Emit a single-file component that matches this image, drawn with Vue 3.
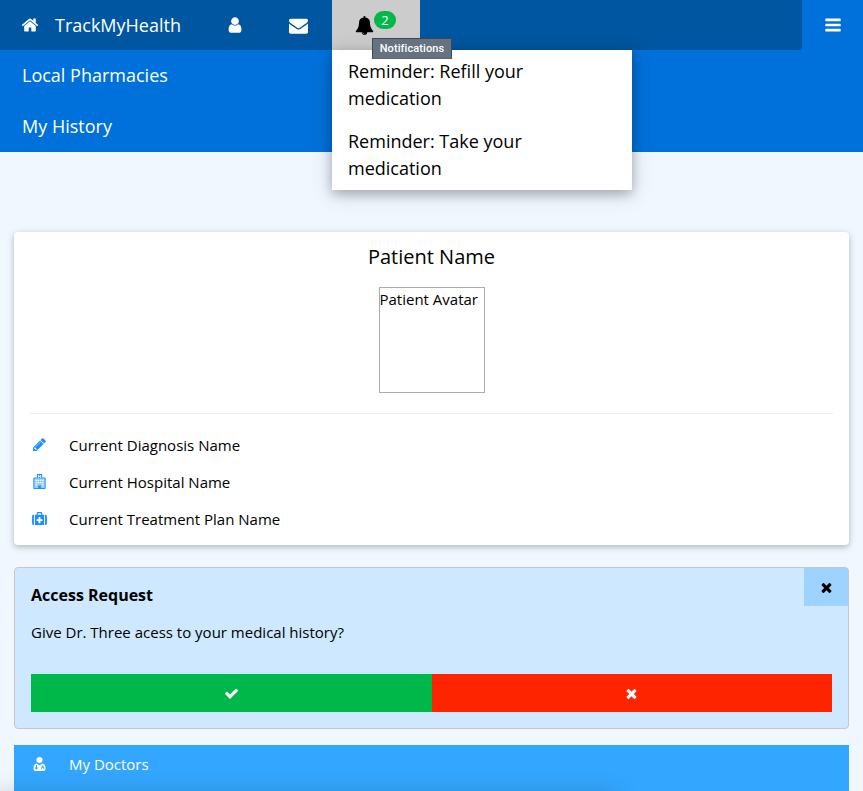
<template>
  <div class="page">
    <header class="header">
      <div class="top-row">
        <nav class="topbar">
          <a class="brand">
            <svg class="ic-home" viewBox="0 0 1792 1792"><path fill="currentColor" :d="icons.home" /></svg>
            <span class="brand-name">TrackMyHealth</span>
          </a>
          <a class="nav-cell nav-user">
            <svg class="ic-user" viewBox="0 0 1792 1792"><path fill="currentColor" :d="icons.user" /></svg>
          </a>
          <a class="nav-cell nav-mail">
            <svg class="ic-mail" viewBox="0 0 1792 1792"><path fill="currentColor" :d="icons.envelope" /></svg>
          </a>
          <a class="nav-bell">
            <svg class="ic-bell" viewBox="0 0 1792 1792"><path fill="currentColor" :d="icons.bell" /></svg>
            <span class="badge">2</span>
          </a>
        </nav>
        <button class="burger">
          <svg class="ic-bars" viewBox="0 0 1792 1792"><path fill="currentColor" :d="icons.bars" /></svg>
        </button>
      </div>
      <a class="side-link">Local Pharmacies</a>
      <a class="side-link">My History</a>
    </header>

    <div class="dropdown">
      <div v-for="note in notifications" :key="note" class="dropdown-item">{{ note }}</div>
    </div>
    <div class="tooltip">Notifications</div>

    <main class="main">
      <section class="card">
        <h2 class="patient-name">Patient Name</h2>
        <div class="avatar">Patient Avatar</div>
        <hr class="rule" />
        <div class="info-row">
          <span class="info-icon">
            <svg class="ic-pencil" viewBox="0 0 1792 1792"><path fill="currentColor" :d="icons.pencil" /></svg>
          </span>
          Current Diagnosis Name
        </div>
        <div class="info-row">
          <span class="info-icon">
            <svg class="ic-hospital" viewBox="0 0 14 17">
              <rect x="1" y="5" width="12" height="11" fill="currentColor" opacity=".45" />
              <path
                fill="currentColor"
                fill-rule="evenodd"
                d="M4 0h6v4h3.2q.8 0 .8.8V16.2q0 .8-.8.8H.8q-.8 0-.8-.8V4.800q0-.8.8-.8H4zM5.200 1v3.500h.9V3h1.800v1.500h.9V1h-.9v1.100H6.100V1zM1.200 5.200V15.800H5.500V13h3v2.800h4.300V5.200z"
              />
              <path
                fill="#fff"
                d="M2.500 6.500h1.500V8H2.500zM5 6.500h1.500V8H5zM7.500 6.500H9V8H7.500zM10 6.500h1.500V8H10zM2.500 9h1.500v1.500H2.500zM5 9h1.500v1.500H5zM7.500 9H9v1.500H7.500zM10 9h1.500v1.500H10zM2.500 11.500h1.500V13H2.500zM10 11.500h1.500V13H10z"
              />
            </svg>
          </span>
          Current Hospital Name
        </div>
        <div class="info-row">
          <span class="info-icon">
            <svg class="ic-medkit" viewBox="0 0 16 14">
              <path
                fill="currentColor"
                fill-rule="evenodd"
                d="M5 3V1.200Q5 0 6.200 0h3.600Q11 0 11 1.200V3H9.800V1.300H6.200V3zM.0 4.500Q0 3 1.500 3H2v11h-.5Q0 14 0 12.500zM3 3h10v11H3zM7 5.500V7.800H4.800v2H7V12h2V9.800h2.200v-2H9V5.500zM14 3h.5Q16 3 16 4.500v8q0 1.500-1.500 1.500H14z"
              />
            </svg>
          </span>
          Current Treatment Plan Name
        </div>
      </section>

      <section class="alert">
        <button class="alert-close">
          <svg class="ic-times" viewBox="0 0 1792 1792"><path fill="currentColor" :d="icons.times" /></svg>
        </button>
        <h3 class="alert-title">Access Request</h3>
        <p class="alert-text">Give Dr. Three acess to your medical history?</p>
        <div class="alert-actions">
          <button class="action accept">
            <svg class="ic-check" viewBox="0 0 1792 1792"><path fill="currentColor" :d="icons.check" /></svg>
          </button>
          <button class="action deny">
            <svg class="ic-small-times" viewBox="0 0 1792 1792"><path fill="currentColor" :d="icons.times" /></svg>
          </button>
        </div>
      </section>

      <section class="doctors">
        <span class="info-icon">
          <svg class="ic-doctor" viewBox="0 0 14 15">
            <path
              fill="currentColor"
              fill-rule="evenodd"
              d="M7 0a3.200 3.200 0 1 1 0 6.400A3.200 3.200 0 0 1 7 0zM3.800 7L7 9.200 10.200 7Q13.500 7.600 13.500 12.500 13.500 15 11.500 15H2.500Q.5 15 .5 12.500 .5 7.600 3.800 7zM3.200 8.500v2.200a1.300 1.300 0 1 0 1 0V8.500zM9.500 9.200v1.600Q8.500 11.200 8.500 13h.9q0-1.500 1-1.500t1 1.500h.9q0-1.800-1-2.200V9.200z"
            />
          </svg>
        </span>
        My Doctors
      </section>
    </main>

    <div class="bottom-edge"></div>
  </div>
</template>

<script setup>
const notifications = ["Reminder: Refill your medication", "Reminder: Take your medication"];

// font-awesome 4 glyphs on their 1792 grid
const icons = {
  home: "M1472 992v480q0 26-19 45t-45 19h-384v-384h-256v384h-384q-26 0-45-19t-19-45v-480q0-1 .5-3t.5-3l575-474 575 474q1 2 1 6zm223-69l-62 74q-8 9-21 11h-3q-13 0-21-7l-692-577-692 577q-12 8-24 7-13-2-21-11l-62-74q-8-10-7-23.5t11-21.5l719-599q32-26 76-26t76 26l244 204v-195q0-14 9-23t23-9h192q14 0 23 9t9 23v408l219 182q10 8 11 21.5t-7 23.5z",
  user: "M1536 1399q0 109-62.5 187t-150.5 78h-854q-88 0-150.5-78t-62.5-187q0-85 8.5-160.5t31.5-152 58.5-131 94-89 134.5-34.5q131 128 313 128t313-128q76 0 134.5 34.5t94 89 58.5 131 31.5 152 8.5 160.5zm-256-887q0 159-112.5 271.5t-271.5 112.5-271.5-112.5-112.5-271.5 112.5-271.5 271.5-112.5 271.5 112.5 112.5 271.5z",
  envelope: "M1792 710v794q0 66-47 113t-113 47h-1472q-66 0-113-47t-47-113v-794q44 49 101 87 362 246 497 345 57 42 92.5 65.5t94.5 48 110 24.5h2q51 0 110-24.5t94.5-48 92.5-65.5q170-123 498-345 57-39 100-87zm0-294q0 79-49 151t-122 123q-376 261-468 325-10 7-42.5 30.5t-54 38-52 32.5-57.5 27-50 9h-2q-23 0-50-9t-57.5-27-52-32.5-54-38-42.5-30.5q-91-64-262-182.5t-205-142.5q-62-42-117-115.5t-55-136.5q0-78 41.5-130t118.5-52h1472q65 0 112.5 47t47.5 113z",
  bell: "M912 1696q0-16-16-16-59 0-101.5-42.5t-42.5-101.5q0-16-16-16t-16 16q0 73 51.5 124.5t124.5 51.5q16 0 16-16zm816-288q0 52-38 90t-90 38h-448q0 106-75 181t-181 75-181-75-75-181h-448q-52 0-90-38t-38-90q50-42 91-88t85-119.5 74.5-158.5 50-206 19.5-260q0-152 117-282.5t307-158.5q-8-19-8-39 0-40 28-68t68-28 68 28 28 68q0 20-8 39 190 28 307 158.5t117 282.5q0 139 19.5 260t50 206 74.5 158.5 85 119.5 91 88z",
  bars: "M1664 1344v128q0 26-19 45t-45 19h-1408q-26 0-45-19t-19-45v-128q0-26 19-45t45-19h1408q26 0 45 19t19 45zm0-512v128q0 26-19 45t-45 19h-1408q-26 0-45-19t-19-45v-128q0-26 19-45t45-19h1408q26 0 45 19t19 45zm0-512v128q0 26-19 45t-45 19h-1408q-26 0-45-19t-19-45v-128q0-26 19-45t45-19h1408q26 0 45 19t19 45z",
  pencil: "M491 1536l91-91-235-235-91 91v107h128v128h107zm523-928q0-22-22-22-10 0-17 7l-542 542q-7 7-7 17 0 22 22 22 10 0 17-7l542-542q7-7 7-17zm-54-192l416 416-832 832h-416v-416zm683 96q0 53-37 90l-166 166-416-416 166-165q36-38 90-38 53 0 91 38l235 234q37 39 37 91z",
  times: "M1490 1322q0 40-28 68l-136 136q-28 28-68 28t-68-28l-294-294-294 294q-28 28-68 28t-68-28l-136-136q-28-28-28-68t28-68l294-294-294-294q-28-28-28-68t28-68l136-136q28-28 68-28t68 28l294 294 294-294q28-28 68-28t68 28l136 136q28 28 28 68t-28 68l-294 294 294 294q28 28 28 68z",
  check: "M1671 566q0 40-28 68l-724 724-136 136q-28 28-68 28t-68-28l-136-136-362-362q-28-28-28-68t28-68l136-136q28-28 68-28t68 28l294 295 656-657q28-28 68-28t68 28l136 136q28 28 28 68z",
};
</script>

<style>
html, body { margin: 0; background: #f0f7ff; }
</style>

<style scoped>
.page {
  position: relative;
  width: 863px;
  height: 791px;
  overflow: hidden;
  background: #f0f7ff;
  color: #000;
  font-family: "Open Sans", sans-serif;
  font-size: 15px;
}
svg { display: block; }

.header { background: #0071da; color: #fff; height: 152px; }
.top-row { display: flex; height: 50px; }
.topbar { flex: 1; display: flex; background: #0056a0; }
.brand {
  width: 204px;
  box-sizing: border-box;
  padding-left: 21px;
  display: flex; align-items: center; gap: 16px;
  font-size: 18px;
}
.brand-name { padding-bottom: 1px; }
.ic-home { width: 18px; height: 18px; }
.nav-cell { display: flex; align-items: center; justify-content: center; }
.nav-user { width: 62px; }
.ic-user { width: 18px; height: 18px; }
.nav-mail { width: 66px; padding-right: 2px; box-sizing: border-box; }
.ic-mail { width: 19px; height: 19px; }
.nav-bell {
  position: relative;
  width: 88px;
  background: #ccc;
  color: #000;
  display: flex; align-items: center;
  padding-left: 23px;
  box-sizing: border-box;
}
.ic-bell { width: 19px; height: 19px; margin-top: 1px; }
.badge {
  position: absolute;
  left: 42px; top: 11px;
  width: 22px; height: 18px;
  border-radius: 9px;
  background: #00b84a;
  color: #fff;
  font-size: 13px;
  line-height: 18px;
  text-align: center;
}
.burger {
  width: 61px;
  padding: 0;
  border: 0;
  background: none;
  color: #fff;
  display: flex; align-items: center; justify-content: center;
}
.ic-bars { width: 18px; height: 18px; }
.side-link {
  display: block;
  height: 51px;
  padding-left: 22px;
  font-size: 18px;
  line-height: 51px;
}

.dropdown {
  position: absolute;
  left: 332px; top: 50px;
  width: 300px;
  background: #fff;
  box-shadow: 0 4px 10px 0 rgba(0, 0, 0, .2), 0 4px 20px 0 rgba(0, 0, 0, .19);
  font-size: 18px;
  line-height: 27px;
  z-index: 2;
}
.dropdown-item { padding: 8px 60px 8px 16px; }
.tooltip {
  position: absolute;
  left: 372px; top: 38px;
  width: 80px; height: 21px;
  box-sizing: border-box;
  background: #66727f;
  border: 1px solid #3f4852;
  border-bottom-color: #5b6672;
  color: #fff;
  font-family: Roboto, sans-serif;
  font-size: 11px;
  font-weight: 500;
  letter-spacing: .1px;
  line-height: 19px;
  text-align: center;
  z-index: 3;
}

.main { padding: 80px 14px 0; }
.card {
  height: 313px;
  box-sizing: border-box;
  padding: 10px 16px 0;
  background: #fff;
  border-radius: 4px;
  box-shadow: 0 2px 5px 0 rgba(0, 0, 0, .16), 0 2px 10px 0 rgba(0, 0, 0, .12);
}
.patient-name {
  margin: 0;
  font-size: 20px;
  font-weight: 400;
  line-height: 30px;
  text-align: center;
}
.avatar {
  width: 106px; height: 106px;
  box-sizing: border-box;
  margin: 15px auto 20px;
  border: 1px solid #aaa;
  font-size: 15px;
  line-height: 22px;
}
.rule { margin: 0 0 12px; border: 0; border-top: 1px solid #eee; }
.info-row {
  height: 37px;
  display: flex; align-items: center;
  font-size: 15px;
}
.info-icon {
  width: 39px;
  flex-shrink: 0;
  display: flex; align-items: center; padding-left: 2px; box-sizing: border-box;
  color: #1e8fff;
}
.ic-pencil { width: 15px; height: 15px; }
.ic-hospital { width: 13px; height: 15px; margin-left: 1px; }
.ic-medkit { width: 15px; height: 13px; }

.alert {
  position: relative;
  height: 162px;
  box-sizing: border-box;
  margin-top: 22px;
  padding: 16px;
  background: #cde8ff;
  border: 1px solid #c8c8c8;
  border-radius: 4px;
}
.alert-close {
  position: absolute;
  right: 0; top: 0;
  width: 44px; height: 38px;
  padding: 0;
  border: 0;
  background: #9fd3ff;
  display: flex; align-items: center; justify-content: center;
}
.ic-times { width: 15px; height: 15px; }
.alert-title { margin: 0; font-size: 16px; font-weight: 700; line-height: 22px; }
.alert-text { margin: 15px 0 0; font-size: 15px; line-height: 22px; }
.alert-actions { display: flex; margin-top: 31px; }
.action {
  flex: 1;
  height: 38px;
  padding: 0;
  border: 0;
  color: #fff;
  display: flex; align-items: center; justify-content: center;
}
.accept { background: #00b84a; }
.deny { background: #ff2400; }
.ic-check { width: 15px; height: 15px; }
.ic-small-times { width: 15px; height: 15px; }

.doctors {
  height: 46px;
  box-sizing: border-box;
  margin-top: 16px;
  padding: 8px 16px 0;
  display: flex; align-items: flex-start;
  background: #33a6ff;
  color: #fff;
  font-size: 15px;
  line-height: 22px;
}
.doctors .info-icon { color: #fff; height: 22px; padding-left: 3px; }
.ic-doctor { width: 13px; height: 14px; }

.bottom-edge {
  position: absolute;
  left: 0; top: 800px;
  width: 610px; height: 20px;
  box-shadow: 0 0 24px 6px rgba(0, 0, 0, .18);
  z-index: 4;
}
</style>
